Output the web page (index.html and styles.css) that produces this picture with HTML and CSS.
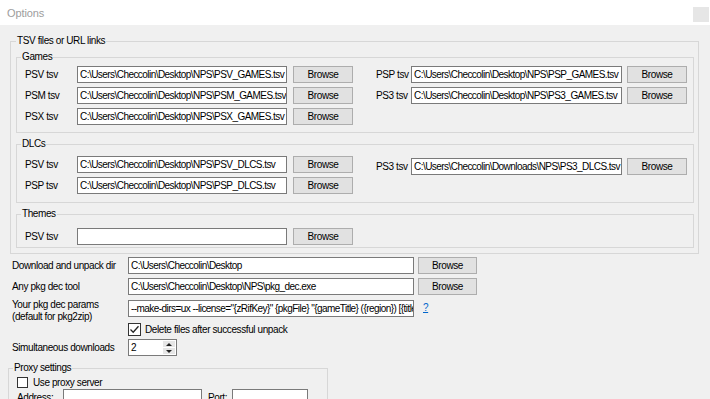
FILE: index.html
```html
<!DOCTYPE html>
<html>
<head>
<meta charset="utf-8">
<title>Options</title>
<link rel="stylesheet" href="styles.css">
</head>
<body>
<div class="titlebar">
  <span class="title">Options</span>
  <span class="close"></span>
</div>
<main class="content">
  <fieldset class="group outer">
    <legend class="lg-outer">TSV files or URL links</legend>
    <fieldset class="group sub games">
      <legend class="lg-sub">Games</legend>
      <div class="tsv-grid">
        <span class="lbl">PSV tsv</span><div class="field">C:\Users\Checcolin\Desktop\NPS\PSV_GAMES.tsv</div><button class="btn">Browse</button>
        <span class="lbl lbl-r">PSP tsv</span><div class="field">C:\Users\Checcolin\Desktop\NPS\PSP_GAMES.tsv</div><button class="btn">Browse</button>
        <span class="lbl">PSM tsv</span><div class="field">C:\Users\Checcolin\Desktop\NPS\PSM_GAMES.tsv</div><button class="btn">Browse</button>
        <span class="lbl lbl-r">PS3 tsv</span><div class="field">C:\Users\Checcolin\Desktop\NPS\PS3_GAMES.tsv</div><button class="btn">Browse</button>
        <span class="lbl">PSX tsv</span><div class="field">C:\Users\Checcolin\Desktop\NPS\PSX_GAMES.tsv</div><button class="btn">Browse</button>
      </div>
    </fieldset>
    <fieldset class="group sub dlcs">
      <legend class="lg-sub">DLCs</legend>
      <div class="tsv-grid">
        <span class="lbl">PSV tsv</span><div class="field">C:\Users\Checcolin\Desktop\NPS\PSV_DLCS.tsv</div><button class="btn">Browse</button>
        <span class="lbl lbl-r shift">PS3 tsv</span><div class="field shift">C:\Users\Checcolin\Downloads\NPS\PS3_DLCS.tsv</div><button class="btn shift">Browse</button>
        <span class="lbl">PSP tsv</span><div class="field">C:\Users\Checcolin\Desktop\NPS\PSP_DLCS.tsv</div><button class="btn">Browse</button>
      </div>
    </fieldset>
    <fieldset class="group sub themes">
      <legend class="lg-sub">Themes</legend>
      <div class="tsv-grid">
        <span class="lbl">PSV tsv</span><div class="field"></div><button class="btn">Browse</button>
      </div>
    </fieldset>
  </fieldset>

  <div class="form">
    <div class="row r1">
      <span class="flbl">Download and unpack dir</span>
      <div class="field wide">C:\Users\Checcolin\Desktop</div>
      <button class="btn fbtn">Browse</button>
    </div>
    <div class="row r2">
      <span class="flbl">Any pkg dec tool</span>
      <div class="field wide">C:\Users\Checcolin\Desktop\NPS\pkg_dec.exe</div>
      <button class="btn fbtn">Browse</button>
    </div>
    <div class="row r3">
      <span class="flbl two">Your pkg dec params<br>(default for pkg2zip)</span>
      <div class="field wide params">--make-dirs=ux --license="{zRifKey}" {pkgFile} "{gameTitle} ({region}) [{titleID}]"</div>
      <a class="help">?</a>
    </div>
    <div class="row r4">
      <span class="check checked">
        <svg width="11" height="11" viewBox="0 0 11 11"><polyline points="1.5,5.5 4.2,8.2 9.5,2.2" fill="none" stroke="#222" stroke-width="1.3"/></svg>
      </span>
      <span class="check-text">Delete files after successful unpack</span>
    </div>
    <div class="row r5">
      <span class="flbl">Simultaneous downloads</span>
      <div class="spin">
        <span class="spin-val">2</span>
        <span class="spin-btns">
          <span class="sb"><span class="tri up"></span></span>
          <span class="sb"><span class="tri down"></span></span>
        </span>
      </div>
    </div>
  </div>

  <fieldset class="group proxy">
    <legend class="lg-proxy">Proxy settings</legend>
    <div class="prow">
      <span class="check"></span>
      <span class="check-text">Use proxy server</span>
    </div>
    <div class="arow">
      <span class="alabel">Address:</span>
      <div class="field addr"></div>
      <span class="plabel">Port:</span>
      <div class="field port"></div>
    </div>
  </fieldset>
</main>
</body>
</html>
```
FILE: styles.css
```css
* { box-sizing: border-box; }

body {
  margin: 0;
  width: 710px;
  height: 399px;
  overflow: hidden;
  background: #f0f0f0;
  font-family: "Liberation Sans", Arial, sans-serif;
  font-size: 10px;
  letter-spacing: -0.4px;
  color: #000;
}

.titlebar {
  height: 25px;
  background: #fff;
  display: flex;
  align-items: center;
  padding-left: 7px;
}
.title {
  font-size: 11px;
  letter-spacing: -0.1px;
  color: #9d9d9d;
}
.close {
  margin-left: auto;
  margin-right: 1px;
  margin-top: 3px;
  width: 16px;
  height: 15px;
  background: #e6e6e6;
}

.content {
  padding: 0;
}

fieldset.group {
  margin: 0;
  border: 1px solid #d7d7d7;
  min-width: 0;
}
legend {
  padding: 0 1px;
  line-height: 12px;
}

.outer {
  margin: 10px 0 0 10px !important;
  width: 689px;
  padding: 4px 4px 5px 5px;
}
.lg-outer { margin-left: 0; }

.sub {
  padding: 3px 4px 7px 7px;
}
.lg-sub { margin-left: -3px; }

.dlcs {
  margin-top: 5px !important;
  padding-top: 6px;
  padding-bottom: 8px;
}
.themes {
  margin-top: 5px !important;
  padding-top: 8px;
  padding-bottom: 2px;
}

.tsv-grid {
  display: grid;
  grid-template-columns: 53px 210px 66px 58px 211px 65px;
  grid-auto-rows: 17px;
  row-gap: 4px;
  align-items: center;
}

.lbl { padding-left: 1px; white-space: nowrap; }
.lbl-r { padding-left: 23px; }
.shift { position: relative; top: 2px; }

.field {
  height: 17px;
  border: 1px solid #7a7a7a;
  background: #fff;
  padding: 0 2px;
  line-height: 15px;
  letter-spacing: -0.55px;
  white-space: nowrap;
  overflow: hidden;
}

.btn {
  justify-self: end;
  width: 60px;
  height: 17px;
  padding: 0;
  margin: 0;
  border: 1px solid #adadad;
  background: #e1e1e1;
  font: inherit;
  letter-spacing: inherit;
  color: #000;
  line-height: 15px;
}

.form {
  margin-left: 12px;
  display: flex;
  flex-direction: column;
}
.row {
  display: flex;
  align-items: center;
}
.flbl {
  width: 116px;
  white-space: nowrap;
}
.flbl.two { line-height: 12px; }
.wide { width: 286px; }
.fbtn { margin-left: 4px; width: 59px; }

.r1 { margin-top: 3px; }
.r2 { margin-top: 4px; }
.r3 { margin-top: 4px; align-items: flex-start; }
.r3 .field { margin-top: 1px; }
.help {
  margin-left: 9px;
  margin-top: 3px;
  color: #0066cc;
  text-decoration: underline;
}
.r4 { margin-top: 0; padding-left: 116px; height: 13px; }
.r5 { margin-top: 3px; }

.check {
  width: 13px;
  height: 13px;
  border: 1px solid #333;
  background: #fff;
  display: flex;
  align-items: center;
  justify-content: center;
}
.check-text { margin-left: 4px; }

.spin {
  width: 49px;
  height: 17px;
  border: 1px solid #7a7a7a;
  background: #fff;
  display: flex;
}
.spin-val {
  flex: 1;
  padding-left: 2px;
  line-height: 15px;
}
.spin-btns {
  width: 13px;
  display: flex;
  flex-direction: column;
  gap: 1px;
  padding: 1px 1px 1px 0;
}
.sb {
  flex: 1;
  background: #e6e6e6;
  display: flex;
  align-items: center;
  justify-content: center;
}
.tri {
  width: 0;
  height: 0;
  border-left: 3px solid transparent;
  border-right: 3px solid transparent;
}
.tri.up { border-bottom: 3px solid #222; }
.tri.down { border-top: 3px solid #222; }

.proxy {
  margin: 6px 0 0 8px !important;
  width: 320px;
  height: 80px;
  padding: 3px 4px 0 8px;
}
.lg-proxy { margin-left: -4px; }
.prow {
  display: flex;
  align-items: center;
  height: 11px;
}
.prow .check { width: 11px; height: 11px; }
.prow .check-text { margin-left: 5px; }
.arow {
  margin-top: 1px;
  display: flex;
  align-items: center;
}
.alabel { width: 46px; }
.addr { width: 139px; }
.plabel { margin-left: 6px; width: 24px; }
.port { width: 76px; }
```
